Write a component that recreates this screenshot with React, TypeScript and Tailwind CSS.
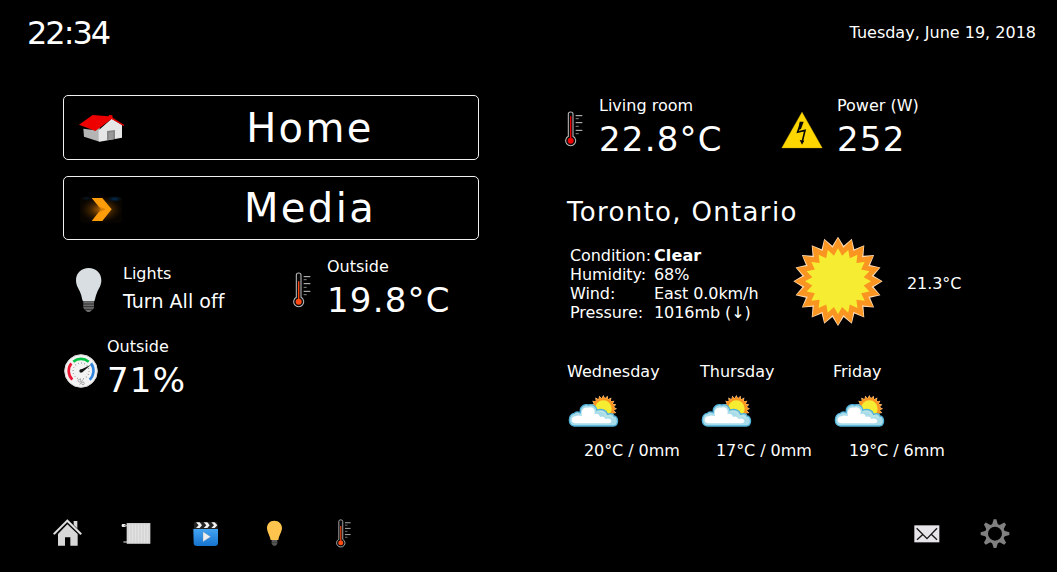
import type { ReactNode } from "react";

function HouseIcon() {
  return (
    <svg width="47" height="29" viewBox="66 90 141 87">
      <polygon points="82,134 118,139 131,126 131,173 84,158" fill="#b5b5b5" />
      <polygon points="128,139 167,104 198,123 198,161 131,173 128,172" fill="#e6e6e6" />
      <polygon points="153,141 177,138 177,165 153,168" fill="#858585" />
      <polygon points="158,146 172,143 172,165 158,167" fill="#999" />
      <polygon points="69,122 110,93 157,97 160,93 169,94 170,101 205,123 203,126 167,105 118,141" fill="#ee0000" />
    </svg>
  );
}

function MediaIcon() {
  return (
    <svg width="46" height="32" viewBox="70 72 138 96">
      <defs>
        <radialGradient id="media-glow">
          <stop offset="0" stopColor="#b46500" />
          <stop offset="0.45" stopColor="#4a2900" />
          <stop offset="1" stopColor="#1a0e00" stopOpacity="0.3" />
        </radialGradient>
        <radialGradient id="media-blue">
          <stop offset="0" stopColor="#00315a" />
          <stop offset="1" stopColor="#001525" stopOpacity="0" />
        </radialGradient>
      </defs>
      <rect x="76" y="80" width="126" height="78" rx="12" fill="url(#media-glow)" />
      <ellipse cx="180" cy="87" rx="25" ry="10" fill="url(#media-blue)" />
      <ellipse cx="96" cy="85" rx="18" ry="7" fill="url(#media-blue)" opacity="0.5" />
      <polygon points="111,84 143,84 171,118 143,153 111,153 139,118" fill="#ff9c0a" />
      <polygon points="128,108 153,118 128,130 139,118" fill="#c97400" opacity="0.7" />
    </svg>
  );
}

function LightBulbIcon() {
  return (
    <svg width="28" height="46" viewBox="60 36 84 138">
      <path d="M101 39C79 39 63 54 63 76C63 92 71 101 76 113C81 124 80 131 84 139H118C121 131 121 124 126 113C131 101 139 92 139 76C139 54 123 39 101 39Z" fill="#d8dee1" />
      <path d="M85 139H117V159L110 166L104 171H97L91 166L85 159Z" fill="#6b6b6b" />
      <path d="M85 147H117M85 155H117M89 163H112" stroke="#303030" strokeWidth="3" />
    </svg>
  );
}

function GaugeIcon() {
  return (
    <svg width="36" height="36" viewBox="24 294 108 108">
      <circle cx="78" cy="348" r="49" fill="#f3f3f3" stroke="#d9d9d9" strokeWidth="3" />
      <g fill="none" strokeWidth="8">
        <path d="M55 320A36 36 0 0 1 101 320" stroke="#00c343" />
        <path d="M49 325A37 37 0 0 0 52 374" stroke="#ef1834" />
        <path d="M108 325A37 37 0 0 1 104 374" stroke="#3185df" />
        <circle cx="78" cy="348" r="24" stroke="#888" strokeWidth="4" strokeDasharray="2 7.4" />
      </g>
      <path d="M75 345L108 329L82 352Z" fill="#151515" />
      <circle cx="78" cy="348" r="5" fill="#151515" />
      <path d="M74 389L84 373" stroke="#888" strokeWidth="2" />
      <circle cx="73" cy="377" r="4" fill="none" stroke="#888" strokeWidth="2" />
      <circle cx="84" cy="385" r="4" fill="none" stroke="#888" strokeWidth="2" />
    </svg>
  );
}

function ThermometerIcon({ color, level, className }: { color: string; level: number; className: string }) {
  return (
    <svg className={className} viewBox="0 0 57 108" preserveAspectRatio="none">
      <path d="M10 76V9Q10 3 17 3Q24 3 24 9V76A15 15 0 1 1 10 76Z" fill="#080808" stroke="#b9b9b9" strokeWidth="3.2" />
      <path d={`M17 ${level}V88`} stroke={color} strokeWidth="4" />
      <circle cx="17" cy="89" r="9" fill={color} />
      <path d="M32 14H52M32 35H52M32 58H52" stroke="#ccc" strokeWidth="3" />
      <path d="M32 23H41M32 46H41M32 68H41" stroke="#888" strokeWidth="3" />
    </svg>
  );
}

function PowerIcon() {
  return (
    <svg width="42" height="38" viewBox="33 64 126 114">
      <path d="M96 67L157 175H35Z" fill="#ffd700" stroke="#b99c00" strokeWidth="1" />
      <path d="M93 97L83 127L105 122L97 155" fill="none" stroke="#080808" strokeWidth="5" />
      <path d="M89 96H101L93 118L87 120ZM89 151L103 153L96 165Z" fill="#080808" />
    </svg>
  );
}

function starPoints(cx: number, cy: number, outer: number, inner: number, rays: number) {
  return Array.from({ length: rays * 2 }, (_, i) => {
    const r = i % 2 ? inner : outer;
    const a = (i * Math.PI) / rays - Math.PI / 2;
    return `${(cx + r * Math.cos(a)).toFixed(1)},${(cy + r * Math.sin(a)).toFixed(1)}`;
  }).join(" ");
}

function SunIcon() {
  return (
    <svg width="92" height="90" viewBox="22 22 276 270">
      <polygon points={starPoints(160, 155, 134, 108, 20)} fill="#ffdcb8" />
      <polygon points={starPoints(160, 155, 131, 102, 20)} fill="#f99520" />
      <polygon points={starPoints(160, 155, 99, 78, 20)} fill="#f6ec32" />
    </svg>
  );
}

function CloudSunIcon() {
  return (
    <svg width="52" height="34" viewBox="24 102 156 102">
      <polygon points={starPoints(130, 146, 41, 32, 20)} fill="#ffdcb8" />
      <polygon points={starPoints(130, 146, 39, 31, 20)} fill="#f99520" />
      <circle cx="130" cy="146" r="25" fill="#f6ec32" />
      <path
        d="M43 198C23 198 23 162 43 160C46 156 54 155 61 158C58 138 75 131 86 135C99 131 110 140 111 151C124 145 139 150 143 163C153 158 161 162 162 168C176 168 177 198 160 198Z"
        fill="#a9dcea"
        stroke="#4fb0d8"
        strokeWidth="4"
      />
      <path
        d="M45 190C30 189 33 168 47 169C53 164 59 168 66 168C61 150 72 140 85 143C101 138 107 152 103 163C110 158 119 163 120 171C127 167 135 171 136 177C144 173 155 177 154 184C154 188 150 190 146 190Z"
        fill="#fff"
      />
      <path d="M111 155C124 151 134 156 137 169C147 166 155 169 158 174" fill="none" stroke="#b8e4e5" strokeWidth="5" />
    </svg>
  );
}

function HomeIcon() {
  return (
    <svg width="29" height="29" viewBox="39 27 87 87">
      <path d="M54 72L82 43L113 72V107H91V82H75V107H54Z" fill="#d8d8d8" />
      <path d="M101 33H112V58L101 47Z" fill="#d8d8d8" />
      <path d="M43 72L82 33L122 72" fill="none" stroke="#111" strokeWidth="10" />
      <path d="M43 71L82 32L122 71" fill="none" stroke="#e2e2e2" strokeWidth="6" strokeLinecap="round" />
    </svg>
  );
}

function RadiatorIcon() {
  return (
    <svg width="30" height="23" viewBox="244 36 90 69">
      <rect x="246" y="42" width="12" height="9" rx="3" fill="#eee" />
      <path d="M253 47H263M251 96H262" stroke="#999" strokeWidth="4" />
      <rect x="261" y="39" width="71" height="62" fill="#e2e2e2" />
      <path d="M262 41H331M262 100H331" stroke="#bbb" strokeWidth="2" />
      <path d="M265 43V98M274 43V98M283 43V98M292 43V98M301 43V98M310 43V98M319 43V98M328 43V98" stroke="#c3c3c3" strokeWidth="2" />
    </svg>
  );
}

function ClapperIcon() {
  return (
    <svg width="26" height="26" viewBox="458 32 78 78">
      <defs>
        <linearGradient id="clapper-blue" x2="0" y2="1">
          <stop stopColor="#43a4f2" />
          <stop offset="1" stopColor="#1673ce" />
        </linearGradient>
      </defs>
      <rect x="461" y="35" width="71" height="25" rx="5" fill="#242424" />
      <path d="M459 56H533V98Q533 107 523 107H470Q460 107 460 98Z" fill="url(#clapper-blue)" />
      <path d="M467 36H478L485 45L478 53H467L475 45ZM490 36H501L508 45L501 53H490L498 45ZM513 36H523L531 45L523 53H513L521 45Z" fill="#f4f4f4" />
      <path d="M488 64L511 79L488 94Z" fill="#eee" stroke="#6b8ba8" strokeWidth="1" />
    </svg>
  );
}

function YellowBulbIcon() {
  return (
    <svg width="16" height="27" viewBox="123 31 48 81">
      <path d="M148 33C134 33 126 43 126 55C126 66 133 74 137 91H160C163 74 171 66 171 55C171 43 162 33 148 33Z" fill="#ffc44d" />
      <path d="M140 91H157V102L152 108H145L140 102Z" fill="#585858" />
      <path d="M140 99H157" stroke="#333" strokeWidth="2" />
    </svg>
  );
}

function MailIcon() {
  return (
    <svg width="26" height="18" viewBox="41 44 78 54">
      <rect x="42" y="45" width="75" height="51" fill="#e7e5e9" />
      <path d="M49 54L80 85L110 54M50 88L69 71M92 71L110 88" fill="none" stroke="#171717" strokeWidth="4" />
    </svg>
  );
}

function GearIcon() {
  return (
    <svg width="30" height="30" viewBox="241 26 90 90">
      <g fill="#808080">
        {[0, 45, 90, 135, 180, 225, 270, 315].map((angle) => (
          <path key={angle} d="M282 27H290L294 40L300 48H272L278 40Z" transform={`rotate(${angle} 286 70)`} />
        ))}
      </g>
      <circle cx="286" cy="70" r="25" fill="#000" stroke="#808080" strokeWidth="8" />
    </svg>
  );
}

function MenuButton({ icon, label, className }: { icon: ReactNode; label: string; className: string }) {
  return (
    <button className={`flex w-[416px] items-center rounded-[5px] border border-[#f0f0f0] ${className}`}>
      <span className="flex w-[78px] shrink-0 justify-start">{icon}</span>
      <span className="flex-1 text-center text-[40px] leading-[62px] tracking-[2.4px]">{label}</span>
    </button>
  );
}

function Reading({ icon, label, value, iconWidth }: { icon: ReactNode; label: string; value: string; iconWidth: string }) {
  return (
    <div className="flex h-16">
      <div className={`flex shrink-0 items-center pt-[3px] ${iconWidth}`}>{icon}</div>
      <div className="pt-px">
        <div className="text-base leading-5">{label}</div>
        <div className="mt-[3px] text-[34px] leading-10 tracking-[1.2px]">{value}</div>
      </div>
    </div>
  );
}

const conditions = [
  ["Condition:", "Clear"],
  ["Humidity:", "68%"],
  ["Wind:", "East 0.0km/h"],
  ["Pressure:", "1016mb (↓)"],
];

const forecast = [
  { day: "Wednesday", value: "20°C / 0mm", indent: "pl-[17px]" },
  { day: "Thursday", value: "17°C / 0mm", indent: "pl-4" },
  { day: "Friday", value: "19°C / 6mm", indent: "pl-4" },
];

export default function App() {
  return (
    <div className="flex h-[572px] w-[1057px] flex-col overflow-hidden whitespace-nowrap bg-black font-['DejaVu_Sans',sans-serif] text-white">
      <header className="flex h-[66px] items-center justify-between pl-[27px] pr-[21px]">
        <div className="text-[32px] leading-10 tracking-[-2px]">22:34</div>
        <div className="text-base">Tuesday, June 19, 2018</div>
      </header>

      <main className="flex h-[444px] pl-[63px] pt-[29px]">
        <section className="w-[502px]">
          <MenuButton icon={<span className="pl-[14px] pt-[2px]"><HouseIcon /></span>} label="Home" className="h-[65px]" />
          <MenuButton icon={<span className="pl-[14px] pt-[3px]"><MediaIcon /></span>} label="Media" className="mt-4 h-16" />
          <div className="flex h-[96px] pt-4">
            <div className="flex w-[229px] pl-3">
              <div className="w-12 pt-[11px]"><LightBulbIcon /></div>
              <div className="pt-2">
                <div className="text-base leading-5">Lights</div>
                <div className="mt-[5px] text-[19px] leading-6 tracking-[0.05px]">Turn All off</div>
              </div>
            </div>
            <Reading
              icon={<span className="pl-px"><ThermometerIcon color="#ff4a13" level={28} className="h-9 w-[19px]" /></span>}
              iconWidth="w-[35px]"
              label="Outside"
              value="19.8°C"
            />
          </div>
          <Reading icon={<span className="pt-[2px]"><GaugeIcon /></span>} iconWidth="w-11" label="Outside" value="71%" />
        </section>

        <section className="flex-1">
          <div className="flex">
            <div className="w-[216px]">
              <Reading
                icon={<ThermometerIcon color="#f00000" level={16} className="h-9 w-[19px]" />}
                iconWidth="w-[34px]"
                label="Living room"
                value="22.8°C"
              />
            </div>
            <Reading icon={<span className="pt-[3px]"><PowerIcon /></span>} iconWidth="w-14" label="Power (W)" value="252" />
          </div>
          <h1 className="mt-[33px] pl-[2px] text-[26px] leading-10 tracking-[1.33px]">Toronto, Ontario</h1>
          <div className="mt-1 flex h-[92px] pl-[5px]">
            <dl className="w-[222px] pt-[10px]">
              {conditions.map(([name, value], i) => (
                <div key={name} className="flex h-[19px] text-base leading-[19px] tracking-[-0.08px]">
                  <dt className="w-[84px] shrink-0">{name}</dt>
                  <dd className={i === 0 ? "font-bold tracking-[0.1px]" : ""}>{value}</dd>
                </div>
              ))}
            </dl>
            <div className="w-[115px] pt-px"><SunIcon /></div>
            <div className="pt-[38px] text-base leading-5 tracking-[-0.1px]">21.3°C</div>
          </div>
          <div className="mt-[34px] flex pl-[2px]">
            {forecast.map(({ day, value, indent }) => (
              <div key={day} className="w-[133px]">
                <div className="text-base leading-5">{day}</div>
                <div className="pl-[1px] pt-3"><CloudSunIcon /></div>
                <div className={`mt-[13px] text-base leading-5 tracking-[-0.08px] ${indent}`}>{value}</div>
              </div>
            ))}
          </div>
        </section>
      </main>

      <footer className="flex h-[47px] items-center pl-[53px] pr-[47px]">
        <div className="w-[68px]"><HomeIcon /></div>
        <div className="w-[72px]"><RadiatorIcon /></div>
        <div className="w-[73px]"><ClapperIcon /></div>
        <div className="w-[70px]"><YellowBulbIcon /></div>
        <ThermometerIcon color="#ff4a13" level={26} className="h-[29px] w-[16px]" />
        <div className="ml-auto w-[66px]"><MailIcon /></div>
        <GearIcon />
      </footer>
    </div>
  );
}
